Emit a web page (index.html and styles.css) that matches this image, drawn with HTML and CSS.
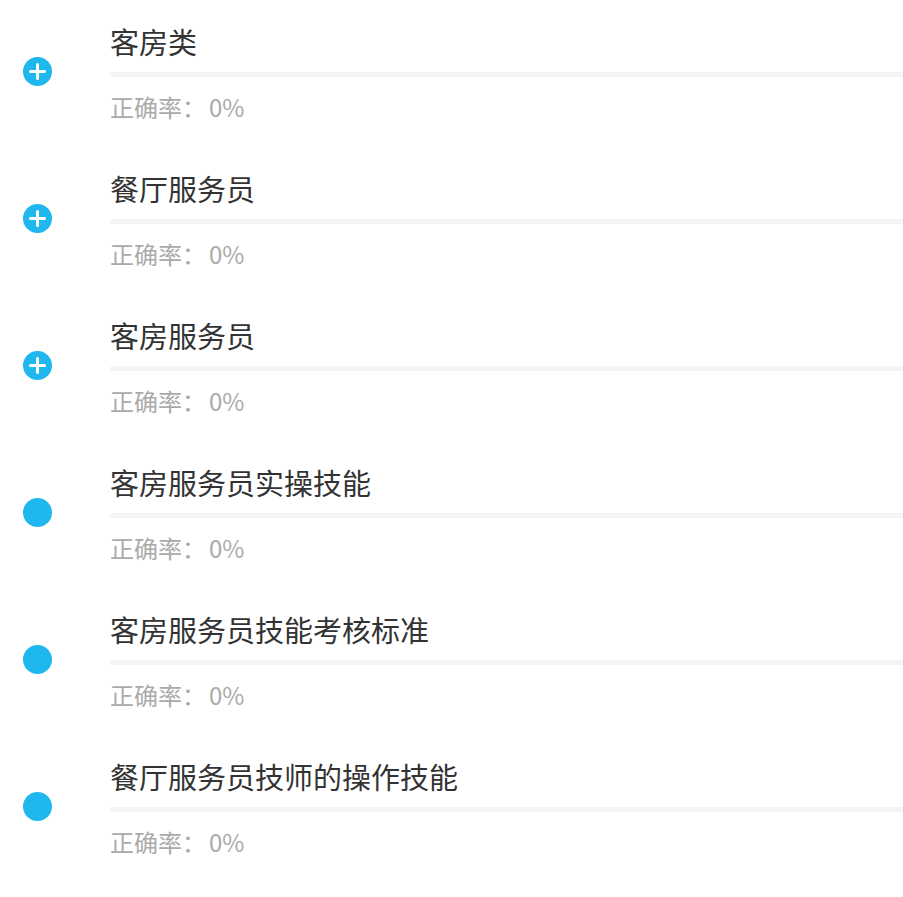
FILE: index.html
```html
<!DOCTYPE html>
<html lang="zh">
<head>
<meta charset="utf-8">
<link rel="stylesheet" href="styles.css">
</head>
<body>
<div class="list">
  <div class="row">
    <div class="icon"><svg viewBox="0 0 29 29" width="29" height="29"><circle cx="14.5" cy="14.5" r="14.5" fill="#1eb7ee"/><path d="M14.5 7.5v14M7.5 14.5h14" stroke="#fff" stroke-width="3" stroke-linecap="round"/></svg></div>
    <div class="content"><div class="title">客房类</div><div class="bar"></div><div class="stat">正确率：<span class="val">0%</span></div></div>
  </div>
  <div class="row">
    <div class="icon"><svg viewBox="0 0 29 29" width="29" height="29"><circle cx="14.5" cy="14.5" r="14.5" fill="#1eb7ee"/><path d="M14.5 7.5v14M7.5 14.5h14" stroke="#fff" stroke-width="3" stroke-linecap="round"/></svg></div>
    <div class="content"><div class="title">餐厅服务员</div><div class="bar"></div><div class="stat">正确率：<span class="val">0%</span></div></div>
  </div>
  <div class="row">
    <div class="icon"><svg viewBox="0 0 29 29" width="29" height="29"><circle cx="14.5" cy="14.5" r="14.5" fill="#1eb7ee"/><path d="M14.5 7.5v14M7.5 14.5h14" stroke="#fff" stroke-width="3" stroke-linecap="round"/></svg></div>
    <div class="content"><div class="title">客房服务员</div><div class="bar"></div><div class="stat">正确率：<span class="val">0%</span></div></div>
  </div>
  <div class="row">
    <div class="icon"><svg viewBox="0 0 29 29" width="29" height="29"><circle cx="14.5" cy="14.5" r="14.5" fill="#1eb7ee"/></svg></div>
    <div class="content"><div class="title">客房服务员实操技能</div><div class="bar"></div><div class="stat">正确率：<span class="val">0%</span></div></div>
  </div>
  <div class="row">
    <div class="icon"><svg viewBox="0 0 29 29" width="29" height="29"><circle cx="14.5" cy="14.5" r="14.5" fill="#1eb7ee"/></svg></div>
    <div class="content"><div class="title">客房服务员技能考核标准</div><div class="bar"></div><div class="stat">正确率：<span class="val">0%</span></div></div>
  </div>
  <div class="row">
    <div class="icon"><svg viewBox="0 0 29 29" width="29" height="29"><circle cx="14.5" cy="14.5" r="14.5" fill="#1eb7ee"/></svg></div>
    <div class="content"><div class="title">餐厅服务员技师的操作技能</div><div class="bar"></div><div class="stat">正确率：<span class="val">0%</span></div></div>
  </div>
</div>
</body>
</html>
```
FILE: styles.css
```css
html, body {
  margin: 0;
  padding: 0;
  background: #fff;
  font-family: "Noto Sans CJK SC", "Noto Sans", sans-serif;
}
.list {
  display: flex;
  flex-direction: column;
}
.row {
  display: flex;
  align-items: flex-start;
  height: 147px;
  padding-top: 21px;
  box-sizing: border-box;
}
.icon {
  width: 29px;
  height: 29px;
  margin-left: 23px;
  margin-top: 36px;
  flex: none;
}
.icon svg { display: block; }
.content {
  flex: 1;
  margin-left: 58px;
  min-width: 0;
}
.title {
  font-size: 29px;
  line-height: 40px;
  color: #333;
}
.bar {
  height: 5px;
  margin-top: 11px;
  background: #f4f4f4;
  border-radius: 3px 0 0 3px;
}
.stat {
  margin-top: 15px;
  font-size: 24px;
  line-height: 30px;
  color: #aaa;
}
.val {
  margin-left: 3px;
}
```
